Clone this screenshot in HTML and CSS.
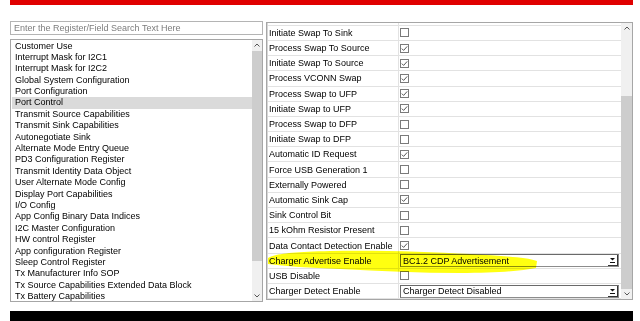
FILE: index.html
```html
<!DOCTYPE html>
<html lang="en">
<head>
    <meta charset="UTF-8">
    <meta name="viewport" content="width=device-width, initial-scale=1.0">
    <title>Register Editor - Port Control</title>
    <link rel="stylesheet" href="styles.css">
</head>
<body>
    <div class="page">
        <div class="top-bar"></div>

        <div class="main">
            <div class="left-col">
                <input type="text" class="search" placeholder="Enter the Register/Field Search Text Here">
                <div class="register-list">
                    <div class="list-items">
                        <div class="list-item">Customer Use</div>
                        <div class="list-item">Interrupt Mask for I2C1</div>
                        <div class="list-item">Interrupt Mask for I2C2</div>
                        <div class="list-item">Global System Configuration</div>
                        <div class="list-item">Port Configuration</div>
                        <div class="list-item selected">Port Control</div>
                        <div class="list-item">Transmit Source Capabilities</div>
                        <div class="list-item">Transmit Sink Capabilities</div>
                        <div class="list-item">Autonegotiate Sink</div>
                        <div class="list-item">Alternate Mode Entry Queue</div>
                        <div class="list-item">PD3 Configuration Register</div>
                        <div class="list-item">Transmit Identity Data Object</div>
                        <div class="list-item">User Alternate Mode Config</div>
                        <div class="list-item">Display Port Capabilities</div>
                        <div class="list-item">I/O Config</div>
                        <div class="list-item">App Config Binary Data Indices</div>
                        <div class="list-item">I2C Master Configuration</div>
                        <div class="list-item">HW control Register</div>
                        <div class="list-item">App configuration Register</div>
                        <div class="list-item">Sleep Control Register</div>
                        <div class="list-item">Tx Manufacturer Info SOP</div>
                        <div class="list-item">Tx Source Capabilities Extended Data Block</div>
                        <div class="list-item">Tx Battery Capabilities</div>
                    </div>
                    <div class="scrollbar list-scroll">
                        <div class="scroll-btn">
                            <svg width="6" height="4" viewBox="0 0 6 4"><polyline points="0.5,3.5 3,1 5.5,3.5" fill="none" stroke="#555" stroke-width="1"/></svg>
                        </div>
                        <div class="scroll-thumb"></div>
                        <div class="scroll-track"></div>
                        <div class="scroll-btn">
                            <svg width="6" height="4" viewBox="0 0 6 4"><polyline points="0.5,0.5 3,3 5.5,0.5" fill="none" stroke="#555" stroke-width="1"/></svg>
                        </div>
                    </div>
                </div>
            </div>

            <div class="field-panel">
                <div class="field-grid">
                    <div class="field-rows">
                        <div class="field-row"><div class="field-label">Process Swap To Sink</div><div class="field-value"><span class="cb"></span></div></div>
                        <div class="field-row"><div class="field-label">Initiate Swap To Sink</div><div class="field-value"><span class="cb"></span></div></div>
                        <div class="field-row"><div class="field-label">Process Swap To Source</div><div class="field-value"><span class="cb checked"><svg width="7" height="7" viewBox="0 0 7 7"><polyline points="0.8,3.6 2.6,5.4 6.2,1.4" fill="none" stroke="#555" stroke-width="1"/></svg></span></div></div>
                        <div class="field-row"><div class="field-label">Initiate Swap To Source</div><div class="field-value"><span class="cb checked"><svg width="7" height="7" viewBox="0 0 7 7"><polyline points="0.8,3.6 2.6,5.4 6.2,1.4" fill="none" stroke="#555" stroke-width="1"/></svg></span></div></div>
                        <div class="field-row"><div class="field-label">Process VCONN Swap</div><div class="field-value"><span class="cb checked"><svg width="7" height="7" viewBox="0 0 7 7"><polyline points="0.8,3.6 2.6,5.4 6.2,1.4" fill="none" stroke="#555" stroke-width="1"/></svg></span></div></div>
                        <div class="field-row"><div class="field-label">Process Swap to UFP</div><div class="field-value"><span class="cb checked"><svg width="7" height="7" viewBox="0 0 7 7"><polyline points="0.8,3.6 2.6,5.4 6.2,1.4" fill="none" stroke="#555" stroke-width="1"/></svg></span></div></div>
                        <div class="field-row"><div class="field-label">Initiate Swap to UFP</div><div class="field-value"><span class="cb checked"><svg width="7" height="7" viewBox="0 0 7 7"><polyline points="0.8,3.6 2.6,5.4 6.2,1.4" fill="none" stroke="#555" stroke-width="1"/></svg></span></div></div>
                        <div class="field-row"><div class="field-label">Process Swap to DFP</div><div class="field-value"><span class="cb"></span></div></div>
                        <div class="field-row"><div class="field-label">Initiate Swap to DFP</div><div class="field-value"><span class="cb"></span></div></div>
                        <div class="field-row"><div class="field-label">Automatic ID Request</div><div class="field-value"><span class="cb checked"><svg width="7" height="7" viewBox="0 0 7 7"><polyline points="0.8,3.6 2.6,5.4 6.2,1.4" fill="none" stroke="#555" stroke-width="1"/></svg></span></div></div>
                        <div class="field-row"><div class="field-label">Force USB Generation 1</div><div class="field-value"><span class="cb"></span></div></div>
                        <div class="field-row"><div class="field-label">Externally Powered</div><div class="field-value"><span class="cb"></span></div></div>
                        <div class="field-row"><div class="field-label">Automatic Sink Cap</div><div class="field-value"><span class="cb checked"><svg width="7" height="7" viewBox="0 0 7 7"><polyline points="0.8,3.6 2.6,5.4 6.2,1.4" fill="none" stroke="#555" stroke-width="1"/></svg></span></div></div>
                        <div class="field-row"><div class="field-label">Sink Control Bit</div><div class="field-value"><span class="cb"></span></div></div>
                        <div class="field-row"><div class="field-label">15 kOhm Resistor Present</div><div class="field-value"><span class="cb"></span></div></div>
                        <div class="field-row"><div class="field-label">Data Contact Detection Enable</div><div class="field-value"><span class="cb checked"><svg width="7" height="7" viewBox="0 0 7 7"><polyline points="0.8,3.6 2.6,5.4 6.2,1.4" fill="none" stroke="#555" stroke-width="1"/></svg></span></div></div>
                        <div class="field-row"><div class="field-label">Charger Advertise Enable</div><div class="field-value">
                            <div class="dropdown"><span class="dropdown-text">BC1.2 CDP Advertisement</span><span class="dropdown-btn"><svg width="7" height="6" viewBox="0 0 7 6"><polygon points="1,1 6,1 3.5,3.5" fill="#111"/><line x1="1" y1="5.5" x2="6" y2="5.5" stroke="#111" stroke-width="1"/></svg></span></div>
                        </div></div>
                        <div class="field-row"><div class="field-label">USB Disable</div><div class="field-value"><span class="cb"></span></div></div>
                        <div class="field-row"><div class="field-label">Charger Detect Enable</div><div class="field-value">
                            <div class="dropdown"><span class="dropdown-text">Charger Detect Disabled</span><span class="dropdown-btn"><svg width="7" height="6" viewBox="0 0 7 6"><polygon points="1,1 6,1 3.5,3.5" fill="#111"/><line x1="1" y1="5.5" x2="6" y2="5.5" stroke="#111" stroke-width="1"/></svg></span></div>
                        </div></div>
                    </div>
                </div>
                <div class="scrollbar grid-scroll">
                    <div class="scroll-btn">
                        <svg width="6" height="4" viewBox="0 0 6 4"><polyline points="0.5,3.5 3,1 5.5,3.5" fill="none" stroke="#555" stroke-width="1"/></svg>
                    </div>
                    <div class="scroll-track"></div>
                    <div class="scroll-thumb"></div>
                    <div class="scroll-btn">
                        <svg width="6" height="4" viewBox="0 0 6 4"><polyline points="0.5,0.5 3,3 5.5,0.5" fill="none" stroke="#555" stroke-width="1"/></svg>
                    </div>
                </div>
            </div>
        </div>

        <div class="bottom-bar"></div>
    </div>

    <svg class="highlight" width="640" height="321" viewBox="0 0 640 321">
        <path d="M268,258 C275,254 290,252 330,251 C380,250 430,252 470,254 C500,256 525,257 537,261 L536,268 C520,271 495,273 460,273 C420,273 380,271 340,269 C310,268 285,266 268,264 Z" fill="#ffff10"/>
    </svg>
</body>
</html>
```

FILE: styles.css
```css
body {
    margin: 0;
    font-family: "Liberation Sans", Arial, sans-serif;
    font-size: 9px;
    color: #000;
    background: #fff;
}
.page {
    padding: 0 7px 0 10px;
}
.top-bar {
    height: 5px;
    background: #e00000;
}
.main {
    display: flex;
    margin-top: 16px;
}
.left-col {
    width: 253px;
    display: flex;
    flex-direction: column;
    gap: 4px;
}
.search {
    height: 14px;
    box-sizing: border-box;
    margin: 0;
    padding: 0 3px;
    border: 1px solid #b4b4b4;
    font-family: "Liberation Sans", Arial, sans-serif;
    font-size: 9px;
    outline: none;
}
.search::placeholder {
    color: #7d7d7d;
}
.register-list {
    height: 263px;
    box-sizing: border-box;
    border: 1px solid #a6a6a6;
    display: flex;
}
.list-items {
    flex: 1;
    overflow: hidden;
    padding: 0.5px 0 0 1px;
}
.list-item {
    height: 11.4px;
    line-height: 11.4px;
    padding-left: 3px;
    white-space: nowrap;
}
.list-item.selected {
    background: #dadada;
}
.scrollbar {
    width: 10px;
    background: #f0f0f0;
    display: flex;
    flex-direction: column;
}
.scroll-btn {
    height: 10px;
    display: flex;
    align-items: center;
    justify-content: center;
}
.scroll-thumb {
    background: #cdcdcd;
}
.list-scroll .scroll-thumb {
    height: 210px;
    margin-top: 1px;
}
.list-scroll .scroll-track {
    flex: 1;
}
.grid-scroll {
    width: 11px;
}
.grid-scroll .scroll-track {
    height: 63px;
}
.grid-scroll .scroll-thumb {
    flex: 1;
}
.field-panel {
    width: 367px;
    height: 278px;
    box-sizing: border-box;
    margin: 1px 0 0 3px;
    border: 1px solid #a6a6a6;
    display: flex;
}
.field-grid {
    flex: 1;
    overflow: hidden;
    border-left: 1px solid #d6d6d6;
}
.field-rows {
    margin-top: -12.4px;
}
.field-row {
    display: grid;
    grid-template-columns: 131px 1fr;
    height: 15.2px;
    box-sizing: border-box;
    border-bottom: 1px solid #e2e2e2;
}
.field-label {
    display: flex;
    align-items: center;
    padding-left: 1px;
    border-right: 1px solid #e2e2e2;
    white-space: nowrap;
}
.field-value {
    display: flex;
    align-items: center;
    padding-left: 1px;
    padding-right: 2px;
}
.cb {
    width: 9px;
    height: 9px;
    box-sizing: border-box;
    border: 1px solid #7a7a7a;
    background: #fff;
    display: flex;
    align-items: center;
    justify-content: center;
}
.dropdown {
    flex: 1;
    height: 13px;
    box-sizing: border-box;
    border: 1px solid #8c8c8c;
    border-top-color: #6a6a6a;
    border-left-color: #6a6a6a;
    display: flex;
    align-items: center;
    background: #fff;
}
.dropdown-text {
    flex: 1;
    padding-left: 2px;
    white-space: nowrap;
}
.dropdown-btn {
    width: 10px;
    height: 11px;
    box-sizing: border-box;
    border-right: 1px solid #333;
    border-bottom: 1px solid #333;
    display: flex;
    align-items: center;
    justify-content: center;
}
.bottom-bar {
    height: 12px;
    margin-top: 9px;
    background: #000;
}
.highlight {
    position: absolute;
    top: 0;
    left: 0;
    pointer-events: none;
    mix-blend-mode: multiply;
}
```
